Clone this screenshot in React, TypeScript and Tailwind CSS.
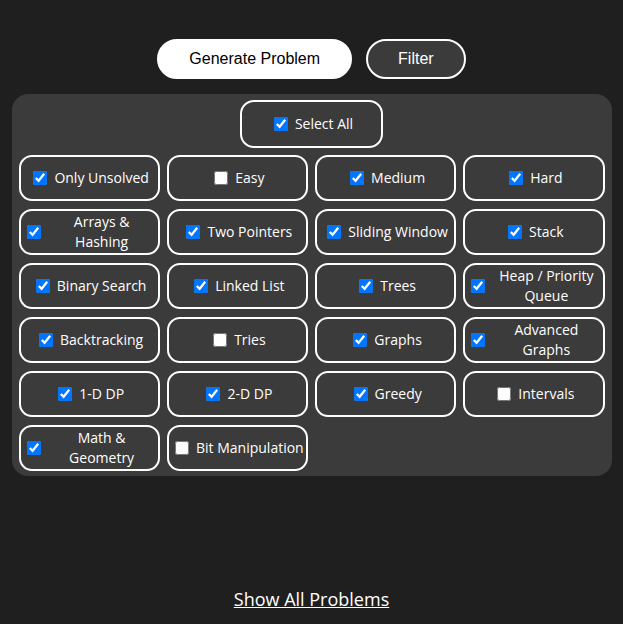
import React from 'react'

interface Topic {
  label: string
  checked: boolean
}

const TOPICS: Topic[] = [
  { label: 'Only Unsolved', checked: true },
  { label: 'Easy', checked: false },
  { label: 'Medium', checked: true },
  { label: 'Hard', checked: true },
  { label: 'Arrays &\nHashing', checked: true },
  { label: 'Two Pointers', checked: true },
  { label: 'Sliding Window', checked: true },
  { label: 'Stack', checked: true },
  { label: 'Binary Search', checked: true },
  { label: 'Linked List', checked: true },
  { label: 'Trees', checked: true },
  { label: 'Heap / Priority\nQueue', checked: true },
  { label: 'Backtracking', checked: true },
  { label: 'Tries', checked: false },
  { label: 'Graphs', checked: true },
  { label: 'Advanced\nGraphs', checked: true },
  { label: '1-D DP', checked: true },
  { label: '2-D DP', checked: true },
  { label: 'Greedy', checked: true },
  { label: 'Intervals', checked: false },
  { label: 'Math &\nGeometry', checked: true },
  { label: 'Bit Manipulation', checked: false },
]

const OptionBox: React.FC<{ topic: Topic }> = ({ topic }) => {
  // labels that wrap take the remaining width, so the box sits at the left
  const wraps = topic.label.includes('\n')
  return (
    <label className="flex h-[46px] items-center justify-center rounded-[13px] border-2 border-white px-[2px] text-white cursor-pointer">
      <input type="checkbox" defaultChecked={topic.checked} className="ml-1 mr-[7px] size-[14px] shrink-0" />
      <span className={`text-center whitespace-pre-line leading-5 ${wraps ? 'flex-1' : ''}`}>{topic.label}</span>
    </label>
  )
}

export default function App() {
  return (
    <div
      className="min-h-screen bg-[#1f1f1f] flex flex-col items-center"
      style={{ fontFamily: '"Open Sans", "Noto Sans", sans-serif' }}
    >
      <div className="mt-[39px] flex gap-[14px]" style={{ fontFamily: '"Liberation Sans", Arial, sans-serif' }}>
        <button className="h-10 rounded-full border-2 border-white bg-white px-[30px] text-base text-black">
          Generate Problem
        </button>
        <button className="h-10 rounded-full border-2 border-white bg-[#3b3b3b] px-[30px] text-base text-white">
          Filter
        </button>
      </div>

      <div className="mt-[15px] w-[600px] rounded-2xl bg-[#3b3b3b] px-[7px] pt-[6px] pb-[5px] text-[14px]">
        <div className="flex justify-center">
          <label className="flex h-[48px] w-[143px] items-center justify-center rounded-[14px] border-2 border-white text-white cursor-pointer">
            <input type="checkbox" defaultChecked className="ml-1 mr-[7px] size-[14px] shrink-0" />
            <span className="leading-5">Select All</span>
          </label>
        </div>
        <div className="mt-[7px] grid grid-cols-4 gap-x-[7px] gap-y-[8px]">
          {TOPICS.map((t) => (
            <OptionBox key={t.label} topic={t} />
          ))}
        </div>
      </div>

      <a href="#" className="mt-[111px] text-[18px] leading-6 text-white underline">
        Show All Problems
      </a>
    </div>
  )
}
